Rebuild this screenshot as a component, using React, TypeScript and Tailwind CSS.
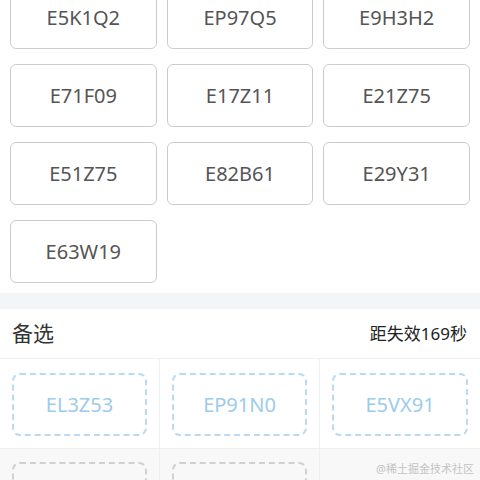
import React from "react"

const selected = [
  "E5K1Q2", "EP97Q5", "E9H3H2",
  "E71F09", "E17Z11", "E21Z75",
  "E51Z75", "E82B61", "E29Y31",
  "E63W19",
]

const candidates = ["EL3Z53", "EP91N0", "E5VX91"]

const font = { fontFamily: '"Noto Sans", "Noto Sans CJK SC", sans-serif' }

export default function App() {
  return (
    <div className="relative h-[480px] w-[480px] overflow-hidden bg-white" style={font}>
      <div className="-mt-[14px] grid grid-cols-3 gap-x-[10px] gap-y-[15px] px-[10px] pb-[10px]">
        {selected.map((code) => (
          <div
            key={code}
            className="flex h-[63px] items-center justify-center rounded-md border border-[#c9cdd2] text-[20px] text-[#555]"
          >
            {code}
          </div>
        ))}
      </div>

      <div className="h-[16px] bg-[#f3f5f6]" />

      <div className="flex h-[49px] items-center justify-between pl-[12px] pr-[13px]">
        <span className="text-[21px] text-[#333]">备选</span>
        <span className="text-[17px] text-[#222]">距失效169秒</span>
      </div>

      <div className="grid grid-cols-3 border-t border-[#efefef]">
        {candidates.map((code, i) => (
          <div
            key={code}
            className={`border-b border-[#efefef] px-[12px] pt-[14px] pb-[12px] ${i < 2 ? "border-r" : ""}`}
          >
            <div className="flex h-[63px] items-center justify-center rounded-lg border-2 border-dashed border-[#b9daf2] text-[20px] text-[#9dcbec]">
              {code}
            </div>
          </div>
        ))}
        {[0, 1, 2].map((i) => (
          <div
            key={i}
            className={`bg-[#f8f8f8] px-[12px] pt-[13px] ${i < 2 ? "border-r border-[#efefef]" : ""}`}
          >
            {i < 2 && (
              <div className="h-[63px] rounded-lg border-2 border-dashed border-[#d0d0d0]" />
            )}
          </div>
        ))}
      </div>

      <span className="absolute right-[6px] bottom-[3px] text-[11px] text-[#c4c4c4]">
        @稀土掘金技术社区
      </span>
    </div>
  )
}
